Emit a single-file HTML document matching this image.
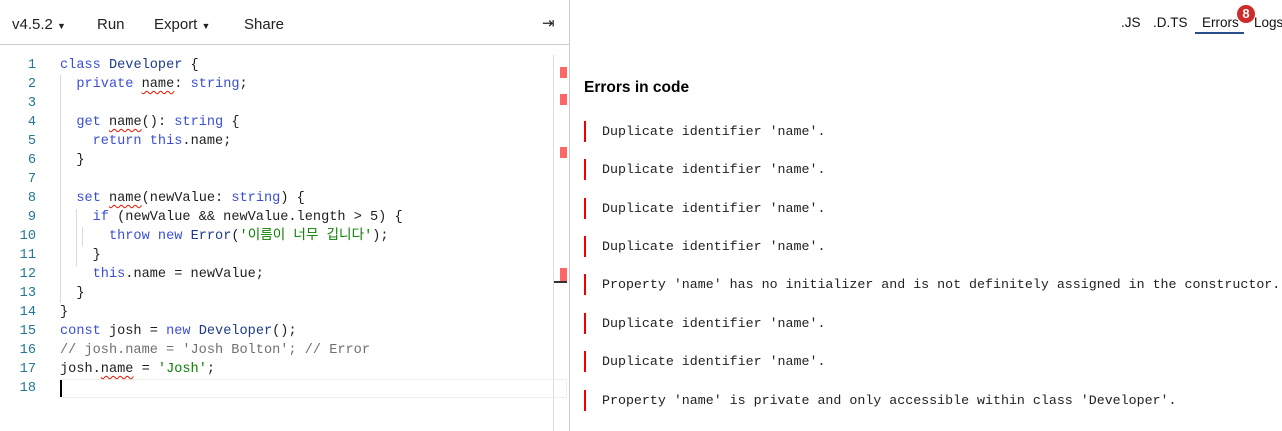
<!DOCTYPE html>
<html><head><meta charset="utf-8"><style>
*{margin:0;padding:0;box-sizing:border-box}
body{width:1282px;height:431px;background:#fff;overflow:hidden;position:relative;font-family:"Liberation Sans",sans-serif;color:#1e1e1e}
.top{position:absolute;left:0;top:0;width:569px;height:45px;border-bottom:1px solid #ccc}
.top span{position:absolute;top:16px;font-size:15px;color:#222}
.vdiv{position:absolute;left:569px;top:0;width:1px;height:431px;background:#ccc}
.code{position:absolute;left:0;top:56px;font-family:"Liberation Mono","Noto Sans CJK KR",monospace;font-size:13.6px}
.ln{position:absolute;left:0;width:36px;text-align:right;color:#237893;height:19px;line-height:19px}
.cl{position:absolute;left:60px;height:19px;line-height:19px;white-space:pre}
.k{color:#3b4fd6}.t{color:#1c3b8c}.s{color:#0a8000}.c{color:#707070}
.sq{text-decoration:underline wavy #e51400;text-decoration-thickness:1px;text-underline-offset:3px}
.guide{position:absolute;width:1px;background:#d8d8d8}
.sb{position:absolute;left:553px;top:55px;width:1px;height:376px;background:#ddd}
.mk{position:absolute;left:560px;width:7px;background:#f66}
.tabs span{position:absolute;top:15px;font-size:13.5px;color:#111}
h3{position:absolute;left:584px;top:79px;font-size:15.5px;font-weight:bold;color:#000}
.err{position:absolute;left:584px;height:21px;border-left:2px solid #e00;padding-left:16px;font-family:"Liberation Mono",monospace;font-size:13.3px;line-height:21px;color:#222;white-space:pre}
</style></head><body>
<div class="top">
<span style="left:12px">v4.5.2 <small style="font-size:9px">▼</small></span>
<span style="left:97px">Run</span>
<span style="left:154px">Export <small style="font-size:9px">▼</small></span>
<span style="left:244px">Share</span>
<span style="left:542px;top:14px">⇥</span>
</div>
<div class="vdiv"></div>
<div class="sb"></div>
<div class="mk" style="top:67px;height:11px"></div>
<div class="mk" style="top:94px;height:11px"></div>
<div class="mk" style="top:147px;height:11px"></div>
<div class="mk" style="top:268px;height:13px"></div>
<div style="position:absolute;left:554px;top:281px;width:13px;height:2px;background:#333"></div>
<div style="position:absolute;left:60px;top:379px;width:507px;height:19px;border:1px solid #eee"></div>
<div style="position:absolute;left:60px;top:380px;width:2px;height:17px;background:#000"></div>
<div class="guide" style="left:60px;top:75px;height:228px"></div>
<div class="guide" style="left:76px;top:209px;height:57px"></div>
<div class="guide" style="left:82px;top:227px;height:19px"></div>
<div class="code">
<div class="ln" style="top:0">1</div><div class="cl" style="top:0"><span class="k">class</span> <span class="t">Developer</span> {</div>
<div class="ln" style="top:19px">2</div><div class="cl" style="top:19px">  <span class="k">private</span> <span class="sq">name</span>: <span class="k">string</span>;</div>
<div class="ln" style="top:38px">3</div>
<div class="ln" style="top:57px">4</div><div class="cl" style="top:57px">  <span class="k">get</span> <span class="sq">name</span>(): <span class="k">string</span> {</div>
<div class="ln" style="top:76px">5</div><div class="cl" style="top:76px">    <span class="k">return</span> <span class="k">this</span>.name;</div>
<div class="ln" style="top:95px">6</div><div class="cl" style="top:95px">  }</div>
<div class="ln" style="top:114px">7</div>
<div class="ln" style="top:133px">8</div><div class="cl" style="top:133px">  <span class="k">set</span> <span class="sq">name</span>(newValue: <span class="k">string</span>) {</div>
<div class="ln" style="top:152px">9</div><div class="cl" style="top:152px">    <span class="k">if</span> (newValue &amp;&amp; newValue.length &gt; 5) {</div>
<div class="ln" style="top:171px">10</div><div class="cl" style="top:171px">      <span class="k">throw</span> <span class="k">new</span> <span class="t">Error</span>(<span class="s">'이름이 너무 깁니다'</span>);</div>
<div class="ln" style="top:190px">11</div><div class="cl" style="top:190px">    }</div>
<div class="ln" style="top:209px">12</div><div class="cl" style="top:209px">    <span class="k">this</span>.name = newValue;</div>
<div class="ln" style="top:228px">13</div><div class="cl" style="top:228px">  }</div>
<div class="ln" style="top:247px">14</div><div class="cl" style="top:247px">}</div>
<div class="ln" style="top:266px">15</div><div class="cl" style="top:266px"><span class="k">const</span> josh = <span class="k">new</span> <span class="t">Developer</span>();</div>
<div class="ln" style="top:285px">16</div><div class="cl c" style="top:285px">// josh.name = 'Josh Bolton'; // Error</div>
<div class="ln" style="top:304px">17</div><div class="cl" style="top:304px">josh.<span class="sq">name</span> = <span class="s">'Josh'</span>;</div>
<div class="ln" style="top:323px">18</div>
</div>
<div class="tabs">
<span style="left:1121px">.JS</span>
<span style="left:1153px">.D.TS</span>
<span style="left:1202px">Errors</span>
<span style="left:1254px">Logs</span>
</div>
<div style="position:absolute;left:1195px;top:32px;width:49px;height:2px;background:#2a4d8f"></div>
<div style="position:absolute;left:1237px;top:5px;width:18px;height:18px;border-radius:50%;background:#d02a2a;color:#fff;font-weight:bold;font-size:13px;text-align:center;line-height:18px">8</div>
<h3>Errors in code</h3>
<div class="err" style="top:121px">Duplicate identifier 'name'.</div>
<div class="err" style="top:159px">Duplicate identifier 'name'.</div>
<div class="err" style="top:198px">Duplicate identifier 'name'.</div>
<div class="err" style="top:236px">Duplicate identifier 'name'.</div>
<div class="err" style="top:274px">Property 'name' has no initializer and is not definitely assigned in the constructor.</div>
<div class="err" style="top:313px">Duplicate identifier 'name'.</div>
<div class="err" style="top:351px">Duplicate identifier 'name'.</div>
<div class="err" style="top:390px">Property 'name' is private and only accessible within class 'Developer'.</div>
</body></html>
